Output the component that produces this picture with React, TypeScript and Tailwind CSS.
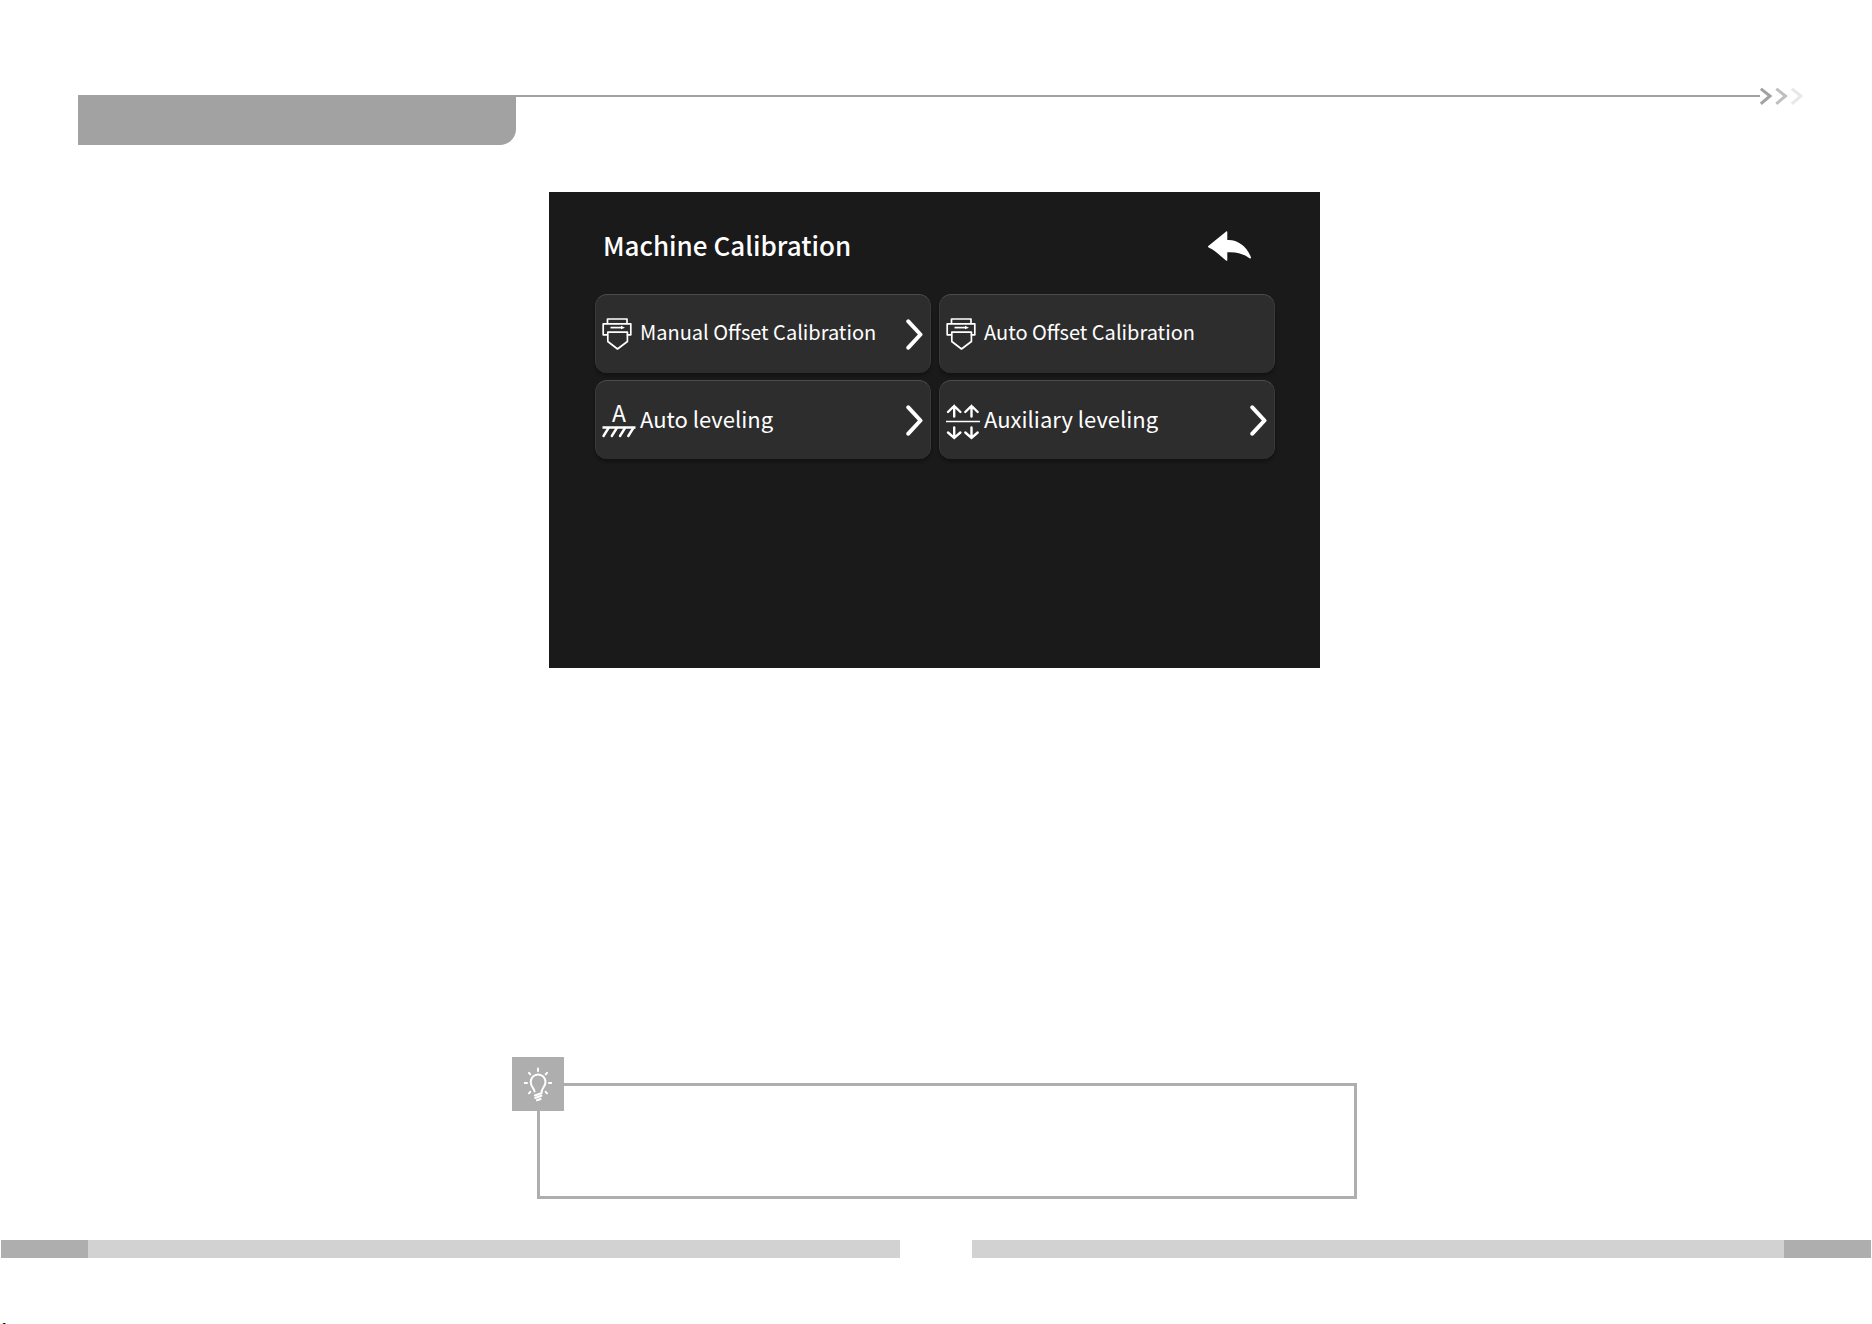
import * as React from "react";

const PrinterIcon: React.FC = () => (
  <svg className="h-9 w-[34px]" viewBox="0 0 34 36" fill="none" stroke="white" strokeWidth="1.7" strokeLinejoin="round" aria-hidden="true">
    <path d="M5.5 7.5V3h19.5v4.5" />
    <path d="M5.5 18.8H1.2V7.8h27.6v11h-4" />
    <path d="M5.8 16.2h19.6v9.3l-9.9 7.5-9.7-7.5z" />
    <path d="M8.5 11.6H20" />
    <path d="M19 9.8l4 1.9-4 1.6z" fill="white" stroke="none" />
  </svg>
);

const LevelIcon: React.FC = () => (
  <svg className="h-10 w-[34px] overflow-visible" viewBox="0 -4 34 40" fill="none" stroke="white" strokeWidth="2.4" strokeLinecap="round" aria-hidden="true">
    <text x="17" y="18" textAnchor="middle" fill="white" stroke="none" fontSize="23">
      A
    </text>
    <path d="M0.5 23.5h33" strokeLinecap="butt" />
    <path d="M6.5 24l-5 8M14.8 24l-5 8M23 24l-5 8M31.3 24l-5 8" />
  </svg>
);

const AuxiliaryIcon: React.FC = () => (
  <svg className="h-10 w-[34px]" viewBox="0 -4 34 40" fill="none" stroke="white" strokeWidth="2.4" strokeLinecap="round" aria-hidden="true">
    <path d="M8.2 12.5V2M2 8l6.2-6L14.4 8M25.5 12.5V2M19.3 8l6.2-6 6.2 6" />
    <path d="M0 17.5h34" strokeWidth="1.5" strokeLinecap="butt" />
    <path d="M8.2 23.5V34M2 28.5l6.2 5.5 6.2-5.5M25.5 23.5V34M19.3 28.5l6.2 5.5 6.2-5.5" />
  </svg>
);

const BackIcon: React.FC = () => (
  <svg className="h-[30px] w-[43px]" viewBox="0 0 43 30" fill="white" aria-hidden="true">
    <path d="M0 15.3L18.5 0.3Q19.3 0 19.3 1V9C29 8.3 39 15 43 26.5Q43 28 41.5 27.2C35 22.5 28 20.5 19.3 21.3V29.2Q19.3 30.3 18 29.6C12 24.5 7 19.5 1 16.8Q-0.3 16 0 15.3Z" />
  </svg>
);

const BulbIcon: React.FC = () => (
  <svg className="h-[54px] w-[52px]" viewBox="0 0 52 54" fill="none" stroke="white" strokeWidth="2" strokeLinecap="round" aria-hidden="true">
    <path d="M22.5 34.5C22.5 31.5 18.7 30 18.7 25a7.4 7.6 0 0 1 14.8 0C33.5 30 29.5 31 29.5 35.5" />
    <path d="M22.8 38.5l6.7-2.2M23.2 41l6.2-2.2M25 43.3l3.6-1.3" />
    <path d="M26 11.5v2.5M17 15.8l1.3 1.5M35 15.8l-1.3 1.5M12.8 26h2.2M37 26h2.2M17 36.3l1.3-1.5M35 36.3l-1.3-1.5" />
  </svg>
);

const ChevronIcon: React.FC = () => (
  <svg className="ml-auto h-[31px] w-[17px]" viewBox="0 0 17 31" fill="none" stroke="white" strokeWidth="4" strokeLinecap="round" strokeLinejoin="round" aria-hidden="true">
    <path d="M2.3 2.3L14.5 15.5 2.3 28.7" />
  </svg>
);

interface CalibrationItem {
  label: string;
  icon: React.ReactNode;
  size: string;
  hasNext: boolean;
}

const items: CalibrationItem[] = [
  { label: "Manual Offset Calibration", icon: <PrinterIcon />, size: "text-[20px]", hasNext: true },
  { label: "Auto Offset Calibration", icon: <PrinterIcon />, size: "text-[20px]", hasNext: false },
  { label: "Auto leveling", icon: <LevelIcon />, size: "text-[22px]", hasNext: true },
  { label: "Auxiliary leveling", icon: <AuxiliaryIcon />, size: "text-[22px]", hasNext: true },
];

const Header: React.FC = () => (
  <header className="flex items-start pt-[88px] pr-[69px] pl-[78px]">
    <div className="mt-[7px] h-[50px] w-[438px] rounded-br-2xl bg-[#a2a2a2]" />
    <div className="mt-[7px] h-[2px] flex-1 bg-[#a2a2a2]" />
    <svg className="h-[17px] w-[43px]" viewBox="0 0 43 17" fill="none" strokeWidth="3" aria-hidden="true">
      <path d="M0.8 0.8L10 8 0.8 15.8" stroke="#a2a2a2" />
      <path d="M16.3 0.8L25.5 8 16.3 15.8" stroke="#bfbfbf" />
      <path d="M31.8 0.8L41 8 31.8 15.8" stroke="#e8e8e8" />
    </svg>
  </header>
);

const Screen: React.FC = () => (
  <section className="mx-auto mt-[47px] min-h-[476px] w-full max-w-[771px] bg-[#1a1a1a] pr-[45px] pl-[46px] text-white">
    <div className="flex items-center justify-between pt-8 pr-6 pl-2">
      <h1 className="pb-0.5 text-[26px] leading-[42px] font-medium">Machine Calibration</h1>
      <button type="button" aria-label="Back">
        <BackIcon />
      </button>
    </div>
    <div className="mt-[26px] grid grid-cols-2 gap-x-2 gap-y-[7px]">
      {items.map((item) => (
        <button
          key={item.label}
          type="button"
          className="flex h-[79px] items-center gap-1 rounded-xl border-x border-t border-x-[#3a3a3a] border-t-[#4c4c4c] bg-[#2d2d2d] pr-[7px] pl-[6px] text-left shadow-[0_3px_3px_#131313]"
        >
          {item.icon}
          <span className={`pb-1 ${item.size}`}>{item.label}</span>
          {item.hasNext && <ChevronIcon />}
        </button>
      ))}
    </div>
  </section>
);

const Note: React.FC = () => (
  <aside className="relative mx-auto mt-[389px] w-full max-w-[845px] pt-[26px] pl-[25px]">
    <div className="h-[116px] border-[3px] border-[#aeaeae]" />
    <div className="absolute top-0 left-0 bg-[#aeaeae]">
      <BulbIcon />
    </div>
  </aside>
);

const Footer: React.FC = () => (
  <footer className="mt-[41px]">
    <div className="flex h-[18px] gap-[72px] px-px">
      <div className="flex-1 border-l-[87px] border-[#aeaeae] bg-[#d2d2d2]" />
      <div className="flex-1 border-r-[87px] border-[#aeaeae] bg-[#d2d2d2]" />
    </div>
    {/* colour registration marks */}
    <div className="mt-[65px] flex h-px pl-[2px]">
      <span className="w-px bg-yellow-300" />
      <span className="w-px bg-red-900" />
      <span className="w-px bg-black" />
      <span className="w-px bg-cyan-400" />
    </div>
  </footer>
);

const App: React.FC = () => {
  return (
    <div className="min-h-screen bg-white font-['Noto_Sans_CJK_SC','Noto_Sans',sans-serif]">
      <Header />
      <main className="pr-[3px]">
        <Screen />
        <Note />
      </main>
      <Footer />
    </div>
  );
};

export default App;
